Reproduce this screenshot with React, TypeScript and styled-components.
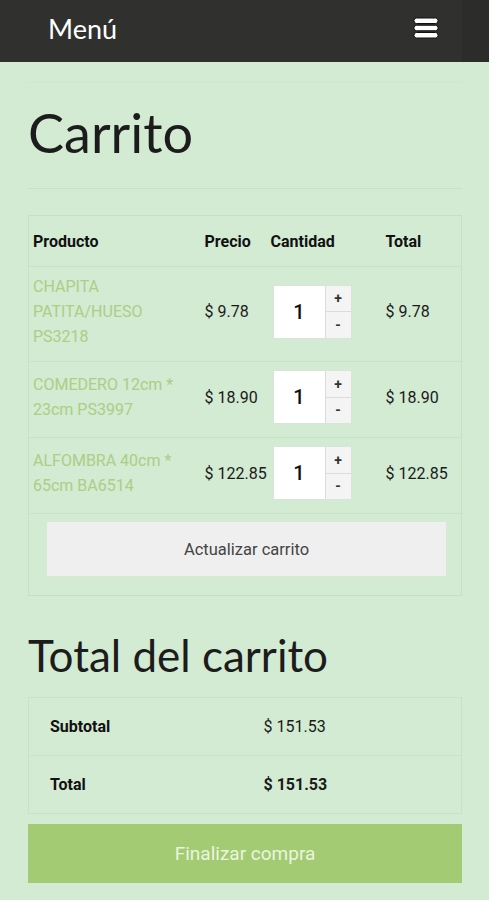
import styled, { createGlobalStyle } from 'styled-components';

const GlobalStyle = createGlobalStyle`
  html, body {
    margin: 0;
    padding: 0;
    background: #d3ead3;
  }
  body {
    font-family: Roboto, "Liberation Sans", Arial, sans-serif;
    color: #222;
  }
  * {
    box-sizing: border-box;
  }
`;

const items = [
  { name: 'CHAPITA PATITA/HUESO PS3218', price: '$ 9.78', total: '$ 9.78', height: 95 },
  { name: 'COMEDERO 12cm * 23cm PS3997', price: '$ 18.90', total: '$ 18.90', height: 76 },
  { name: 'ALFOMBRA 40cm * 65cm BA6514', price: '$ 122.85', total: '$ 122.85', height: 76 },
];

const MenuIcon = () => (
  <svg width="26" height="22" viewBox="0 0 26 22">
    <rect x="1" y="1" width="24" height="5.5" rx="2.5" fill="#fff" stroke="#111" strokeWidth="1" />
    <rect x="1" y="8.25" width="24" height="5.5" rx="2.5" fill="#fff" stroke="#111" strokeWidth="1" />
    <rect x="1" y="15.5" width="24" height="5.5" rx="2.5" fill="#fff" stroke="#111" strokeWidth="1" />
  </svg>
);

export default function App() {
  return (
    <Page>
      <GlobalStyle />
      <TopBar>
        <MenuLabel>Menú</MenuLabel>
        <MenuButton>
          <MenuIcon />
        </MenuButton>
      </TopBar>
      <Main>
        <PageTitle>Carrito</PageTitle>
        <Divider />
        <CartTable>
          <colgroup>
            <col style={{ width: 176 }} />
            <col style={{ width: 66 }} />
            <col style={{ width: 114 }} />
            <col />
          </colgroup>
          <thead>
            <tr>
              <HeadCell>Producto</HeadCell>
              <HeadCell>Precio</HeadCell>
              <HeadCell>Cantidad</HeadCell>
              <HeadCell>Total</HeadCell>
            </tr>
          </thead>
          <tbody>
            {items.map(item => (
              <ItemRow key={item.name} $height={item.height}>
                <NameCell>
                  <ProductLink>{item.name}</ProductLink>
                </NameCell>
                <Cell>{item.price}</Cell>
                <Cell>
                  <Quantity>
                    <QtyInput>1</QtyInput>
                    <QtyButtons>
                      <QtyButton>+</QtyButton>
                      <QtyButton>-</QtyButton>
                    </QtyButtons>
                  </Quantity>
                </Cell>
                <Cell>{item.total}</Cell>
              </ItemRow>
            ))}
            <tr>
              <ActionsCell colSpan={4}>
                <UpdateButton>Actualizar carrito</UpdateButton>
              </ActionsCell>
            </tr>
          </tbody>
        </CartTable>

        <SectionTitle>Total del carrito</SectionTitle>
        <TotalsTable>
          <tbody>
            <TotalsRow>
              <TotalsLabel>Subtotal</TotalsLabel>
              <TotalsValue>$ 151.53</TotalsValue>
            </TotalsRow>
            <TotalsRow>
              <TotalsLabel>Total</TotalsLabel>
              <TotalsValue $strong>$ 151.53</TotalsValue>
            </TotalsRow>
          </tbody>
        </TotalsTable>
        <CheckoutButton>Finalizar compra</CheckoutButton>
      </Main>
    </Page>
  );
}

const Page = styled.div`
  min-height: 900px;
  background: #d3ead3;
`;

const TopBar = styled.header`
  height: 62px;
  background: #30302e;
  display: flex;
  align-items: center;
  justify-content: space-between;
  padding: 0 50px 0 48px;
  box-shadow: inset -27px 0 0 #2c2c2a;
`;

const MenuLabel = styled.span`
  font-family: Lato, "Open Sans", sans-serif;
  font-size: 27px;
  color: #fff;
  margin-top: -6px;
`;

const MenuButton = styled.div`
  display: flex;
  margin-top: -6px;
`;

const Main = styled.main`
  margin: 20px 27px 0 28px;
  padding-top: 20px;
  border-top: 1px solid #cfe5cf;
`;

const PageTitle = styled.h1`
  font-family: Lato, "Open Sans", sans-serif;
  font-weight: 400;
  font-size: 54px;
  line-height: 60px;
  margin: 0;
  color: #1c1c1c;
`;

const Divider = styled.hr`
  border: none;
  border-top: 1px solid #c8dfc8;
  margin: 25px 0 26px;
`;

const CartTable = styled.table`
  width: 100%;
  border-collapse: collapse;
  table-layout: fixed;
  border: 1px solid #c7dec7;
  font-size: 16px;
`;

const HeadCell = styled.th`
  text-align: left;
  font-weight: 700;
  font-size: 16px;
  color: #111;
  height: 51px;
  padding: 0;
  white-space: nowrap;
  border-bottom: 1px solid #c9e0c9;
  &:first-child {
    padding-left: 4px;
  }
  &:last-child {
    padding-left: 1px;
  }
`;

const ItemRow = styled.tr<{ $height: number }>`
  height: ${p => p.$height}px;
  border-bottom: 1px solid #c9e0c9;
`;

const Cell = styled.td`
  vertical-align: middle;
  color: #1a1a1a;
  white-space: nowrap;
  padding: 0 0 5px;
  &:last-child {
    padding-left: 1px;
  }
`;

const NameCell = styled.td`
  vertical-align: middle;
  padding: 0 16px 5px 4px;
`;

const ProductLink = styled.a`
  color: #a9d083;
  font-size: 16px;
  line-height: 25px;
  text-decoration: none;
`;

const Quantity = styled.div`
  display: flex;
  width: 79px;
  height: 54px;
  margin-left: 2px;
  border: 1px solid #d8e5d8;
`;

const QtyInput = styled.div`
  flex: 1;
  background: #fff;
  display: flex;
  align-items: center;
  justify-content: center;
  font-size: 20px;
  font-weight: 500;
  color: #111;
`;

const QtyButtons = styled.div`
  width: 26px;
  display: flex;
  flex-direction: column;
  border-left: 1px solid #dcdcdc;
`;

const QtyButton = styled.div`
  flex: 1;
  background: #f4f4f4;
  display: flex;
  align-items: center;
  justify-content: center;
  font-size: 14px;
  font-weight: 700;
  color: #333;
  &:first-child {
    border-bottom: 1px solid #dcdcdc;
  }
`;

const ActionsCell = styled.td`
  padding: 8px 15px 19px 18px;
`;

const UpdateButton = styled.div`
  height: 54px;
  background: #efefef;
  display: flex;
  align-items: center;
  justify-content: center;
  font-size: 16.5px;
  color: #444;
`;

const SectionTitle = styled.h2`
  font-family: Lato, "Open Sans", sans-serif;
  font-weight: 400;
  font-size: 44px;
  line-height: 50px;
  margin: 34px 0 17px;
  color: #1c1c1c;
`;

const TotalsTable = styled.table`
  width: 100%;
  border-collapse: collapse;
  border: 1px solid #c9e0c9;
  font-size: 16px;
`;

const TotalsRow = styled.tr`
  height: 58px;
  border-bottom: 1px solid #c9e0c9;
`;

const TotalsLabel = styled.th`
  text-align: left;
  font-weight: 700;
  color: #111;
  padding-left: 21px;
  width: 234px;
`;

const TotalsValue = styled.td<{ $strong?: boolean }>`
  color: #1a1a1a;
  font-weight: ${p => (p.$strong ? 700 : 400)};
`;

const CheckoutButton = styled.div`
  margin-top: 10px;
  height: 59px;
  background: #a2cb73;
  display: flex;
  align-items: center;
  justify-content: center;
  color: #eaf5df;
  font-size: 19px;
`;
